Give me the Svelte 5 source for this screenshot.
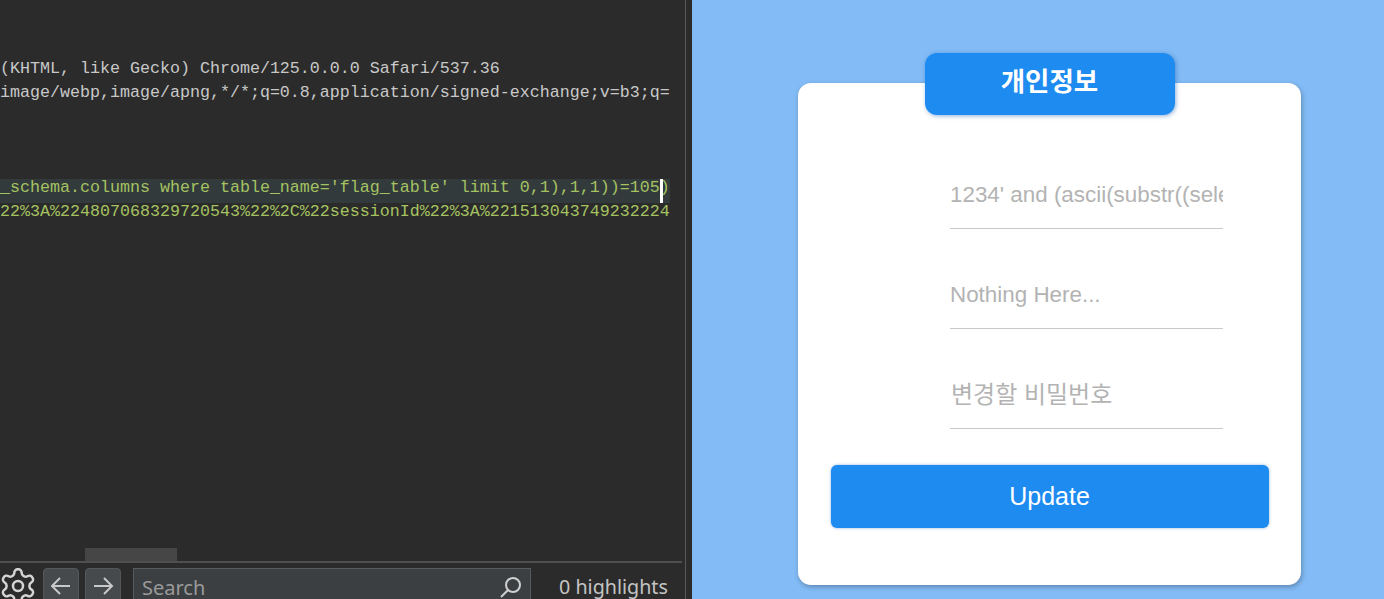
<script>
  const lines = [
    { text: "(KHTML, like Gecko) Chrome/125.0.0.0 Safari/537.36" },
    { text: "image/webp,image/apng,*/*;q=0.8,application/signed-exchange;v=b3;q=" },
    { text: "" },
    { text: "" },
    { text: "" },
    { text: "_schema.columns where table_name='flag_table' limit 0,1),1,1))=105)", kind: "hl" },
    { text: "22%3A%224807068329720543%22%2C%22sessionId%22%3A%221513043749232224", kind: "green" }
  ];

  const fields = [
    { hint: "1234' and (ascii(substr((select" },
    { hint: "Nothing Here..." },
    { hint: "변경할 비밀번호", kr: true }
  ];
</script>

<div class="page">
  <section class="burp">
    <div class="pane">
      <div class="dump">
        {#each lines as line}
          <div class="line {line.kind ?? ''}">{line.text}{#if line.kind === 'hl'}<i class="caret"></i>{/if}</div>
        {/each}
      </div>
      <div class="scroll"><div class="thumb"></div></div>
      <div class="foot">
        <svg class="gear" viewBox="0 0 24 24" width="40" height="40" fill="none" stroke="#d4d4d4" stroke-width="1.5" stroke-linejoin="round">
          <path d="M12.22 2h-.44a2 2 0 0 0-2 2v.18a2 2 0 0 1-1 1.73l-.43.25a2 2 0 0 1-2 0l-.15-.08a2 2 0 0 0-2.73.73l-.22.38a2 2 0 0 0 .73 2.73l.15.1a2 2 0 0 1 1 1.72v.51a2 2 0 0 1-1 1.74l-.15.09a2 2 0 0 0-.73 2.73l.22.38a2 2 0 0 0 2.73.73l.15-.08a2 2 0 0 1 2 0l.43.25a2 2 0 0 1 1 1.73V20a2 2 0 0 0 2 2h.44a2 2 0 0 0 2-2v-.18a2 2 0 0 1 1-1.73l.43-.25a2 2 0 0 1 2 0l.15.08a2 2 0 0 0 2.73-.73l.22-.39a2 2 0 0 0-.73-2.73l-.15-.08a2 2 0 0 1-1-1.74v-.5a2 2 0 0 1 1-1.74l.15-.09a2 2 0 0 0 .73-2.73l-.22-.38a2 2 0 0 0-2.73-.73l-.15.08a2 2 0 0 1-2 0l-.43-.25a2 2 0 0 1-1-1.73V4a2 2 0 0 0-2-2z"/>
          <circle cx="12" cy="12" r="3"/>
        </svg>
        <button class="nav" aria-label="Previous">
          <svg viewBox="0 0 24 24" width="24" height="24" fill="none" stroke="#c8c8c8" stroke-width="2"><path d="M21 12H3M11 4l-8 8 8 8"/></svg>
        </button>
        <button class="nav" aria-label="Next">
          <svg viewBox="0 0 24 24" width="24" height="24" fill="none" stroke="#c8c8c8" stroke-width="2"><path d="M3 12h18M13 4l8 8-8 8"/></svg>
        </button>
        <div class="search">
          <span>Search</span>
          <svg viewBox="0 0 24 24" width="24" height="24" fill="none" stroke="#d0d0d0" stroke-width="2"><circle cx="14" cy="10" r="7"/><path d="M9 15l-7 7"/></svg>
        </div>
        <span class="count">0 highlights</span>
      </div>
    </div>
  </section>

  <main class="stage">
    <div class="card">
      <h1 class="tab">개인정보</h1>
      {#each fields as f}
        <input class="field" class:kr={f.kr} type="text" placeholder={f.hint} />
      {/each}
      <button class="update">Update</button>
    </div>
  </main>
</div>

<style>
  :global(body) {
    margin: 0;
    overflow: hidden;
  }

  .page {
    display: flex;
    height: 599px;
    overflow: hidden;
    font-family: "Liberation Sans", "Noto Sans CJK KR", sans-serif;
  }

  .burp {
    width: 692px;
    flex-shrink: 0;
    background: #2b2b2b;
  }
  .pane {
    box-sizing: border-box;
    width: 686px;
    height: 100%;
    border-right: 1px solid #5a5a5a;
    display: flex;
    flex-direction: column;
  }

  .dump {
    height: 548px;
    flex-shrink: 0;
    padding-top: 57px;
    box-sizing: border-box;
    font-family: "Liberation Mono", monospace;
    font-size: 16.67px;
    line-height: 23.9px;
    color: #c8c8c8;
    white-space: pre;
    overflow: hidden;
  }
  .line {
    position: relative;
    height: 23.9px;
    width: 670px;
    overflow: visible;
    z-index: 0;
  }
  .hl, .green { color: #a5c261; }
  .hl::before {
    content: "";
    position: absolute;
    z-index: -1;
    left: 0;
    right: 0;
    top: 3px;
    bottom: -3px;
    background: #323a3c;
  }
  .caret {
    position: absolute;
    left: 660px;
    top: 3px;
    width: 3px;
    height: 24px;
    background: #fff;
  }

  .scroll { height: 13px; flex-shrink: 0; }
  .thumb {
    margin-left: 85px;
    width: 92px;
    height: 13px;
    background: #464646;
  }

  .foot {
    width: 682px;
    border-top: 2px solid #4f4f4f;
    display: flex;
    align-items: flex-start;
    padding-top: 5px;
    flex-shrink: 0;
  }
  .gear { margin: -2px 5px 0 -2px; flex-shrink: 0; }
  .nav {
    width: 36px;
    height: 36px;
    margin-right: 6px;
    padding: 0;
    display: flex;
    align-items: center;
    justify-content: center;
    background: #464a4d;
    border: 1px solid #54585b;
    border-radius: 4px;
  }
  .search {
    box-sizing: border-box;
    width: 398px;
    height: 36px;
    margin-left: 6px;
    padding: 0 7px 0 8px;
    display: flex;
    justify-content: space-between;
    align-items: center;
    background: #3c3f41;
    border: 1px solid #5a5a5a;
    color: #9a9a9a;
    font-family: "Noto Sans", sans-serif;
    font-size: 20px;
  }
  .search svg { margin-top: 2px; }
  .search span { margin-top: 3px; }
  .count {
    margin-left: 28px;
    margin-top: 5px;
    color: #c4c4c4;
    font-family: "Noto Sans", sans-serif;
    font-size: 19.7px;
    white-space: nowrap;
  }

  .stage {
    flex: 1;
    background: #82bbf5;
    padding: 83px 0 0 106px;
  }
  .card {
    box-sizing: border-box;
    width: 503px;
    height: 502px;
    padding: 0 33px;
    background: #fff;
    border-radius: 13px;
    box-shadow: 1px 2px 5px rgba(0, 0, 0, 0.28);
    display: flex;
    flex-direction: column;
    align-items: center;
  }
  .tab {
    box-sizing: border-box;
    width: 250px;
    height: 62px;
    margin: -30px 0 47px 0;
    background: #1e8bf1;
    border-radius: 12px;
    box-shadow: 1px 1px 4px rgba(30, 100, 180, 0.5);
    color: #fff;
    font-size: 26.5px;
    font-weight: 700;
    line-height: 58px;
    text-align: center;
  }
  .field {
    box-sizing: border-box;
    display: block;
    align-self: flex-start;
    width: 273px;
    height: 67px;
    margin-bottom: 33px;
    margin-left: 119px;
    padding: 0;
    border: 0;
    border-bottom: 1px solid #c9c9c9;
    outline: none;
    background: transparent;
    font: inherit;
    font-size: 22.4px;
  }
  .field.kr { font-size: 24px; text-indent: 1px; }
  .field::placeholder { color: #b3b3b3; opacity: 1; }
  .update {
    width: 438px;
    height: 63px;
    margin-top: 3px;
    background: #1e8bf1;
    border: 0;
    border-radius: 6px;
    box-shadow: 0 0 3px rgba(30, 100, 180, 0.5);
    color: #fff;
    font: inherit;
    font-size: 25px;
  }
</style>
